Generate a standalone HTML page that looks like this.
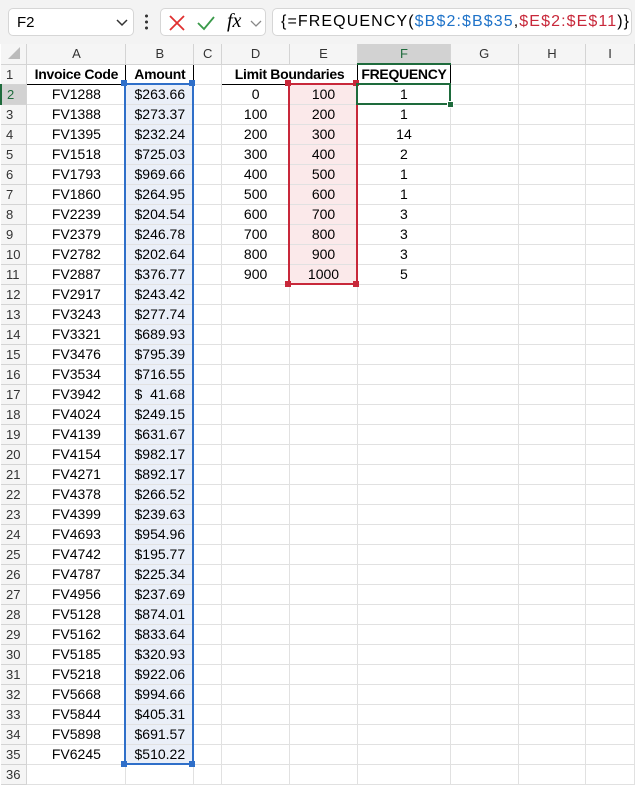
<!DOCTYPE html>
<html><head><meta charset="utf-8"><style>
*{box-sizing:border-box;margin:0;padding:0}
body{width:635px;height:789px;overflow:hidden;background:#fff;font-family:"Liberation Sans",Arial,sans-serif;position:relative}
.top{position:absolute;left:0;top:0;width:635px;height:44px;background:#f3f3f3}
.box{position:absolute;background:#fff;border:1px solid #d6d6d6;border-radius:5px}
table{position:absolute;left:0;top:44px;border-collapse:collapse;table-layout:fixed}
td{height:20px;border-right:1px solid #e1e1e1;border-bottom:1px solid #e1e1e1;font-size:14px;text-align:center;white-space:nowrap;overflow:visible;padding:0;line-height:19px;color:#000}
tr.h td{background:#f5f5f5;color:#333;font-size:13px;border-color:#d4d4d4}
td.r{background:#f5f5f5;color:#333;font-size:13px;text-align:left;padding-left:5px;border-color:#d4d4d4}
td.b{font-weight:bold;border:1px solid #000;letter-spacing:-0.3px}
.blue{background:#eaeff8}
.pink{background:#fbe9ea}
.sel{position:absolute;border:2px solid}
.hd{position:absolute;width:6px;height:6px}
</style></head><body>
<div class="top"></div>
<div class="box" style="left:8px;top:8px;width:126px;height:28px"><span style="position:absolute;left:8px;top:5px;font-size:15px">F2</span><svg style="position:absolute;left:107px;top:10px" width="12" height="8"><path d="M1 1l5 5 5-5" fill="none" stroke="#333" stroke-width="1.5"/></svg></div>
<div style="position:absolute;left:145px;top:13px;width:3px;height:18px;background:radial-gradient(circle,#333 1.4px,transparent 1.6px) 0 0/3px 6px"></div>
<div class="box" style="left:160px;top:8px;width:106px;height:28px">
<svg style="position:absolute;left:7px;top:5px" width="18" height="18"><path d="M2 2l14 14M16 2L2 16" stroke="#e03030" stroke-width="1.8"/></svg>
<svg style="position:absolute;left:35px;top:5px" width="20" height="18"><path d="M2 9l6 6L18 3" fill="none" stroke="#3a9a4a" stroke-width="1.8"/></svg>
<span style="position:absolute;left:66px;top:1px;font-family:'Liberation Serif',serif;font-style:italic;font-size:20px">fx</span>
<svg style="position:absolute;left:89px;top:11px" width="12" height="8"><path d="M1 1l5 5 5-5" fill="none" stroke="#888" stroke-width="1.3"/></svg></div>
<div class="box" style="left:272px;top:8px;width:360px;height:28px"><span style="position:absolute;left:8px;top:4px;font-size:16px;letter-spacing:1.1px;font-family:'Liberation Sans',sans-serif">{=FREQUENCY(<span style="color:#1f73c9">$B$2:$B$35</span>,<span style="color:#c8283a">$E$2:$E$11</span>)}</span></div>
<table>
<colgroup><col style="width:26px"><col style="width:99px"><col style="width:68px"><col style="width:28px"><col style="width:68px"><col style="width:68px"><col style="width:93px"><col style="width:68px"><col style="width:68px"><col style="width:49px"></colgroup>
<tr class="h"><td><svg width="14" height="14" style="position:relative;top:2px"><path d="M13 1V13H1Z" fill="#bbb"/></svg></td><td>A</td><td>B</td><td>C</td><td>D</td><td>E</td><td style="background:#d2d2d2;color:#1e6b3c;border-bottom:2px solid #1e6b3c">F</td><td>G</td><td>H</td><td>I</td></tr>
<tr><td class="r">1</td><td class="b">Invoice Code</td><td class="b">Amount</td><td></td><td class="b" colspan="2">Limit Boundaries</td><td class="b">FREQUENCY</td><td></td><td></td><td></td></tr>
<tr><td class="r" style="background:#d2d2d2;color:#1e6b3c;border-left:2px solid #1e6b3c">2</td><td>FV1288</td><td class="blue">$263.66</td><td></td><td>0</td><td class="pink">100</td><td>1</td><td></td><td></td><td></td></tr>
<tr><td class="r">3</td><td>FV1388</td><td class="blue">$273.37</td><td></td><td>100</td><td class="pink">200</td><td>1</td><td></td><td></td><td></td></tr>
<tr><td class="r">4</td><td>FV1395</td><td class="blue">$232.24</td><td></td><td>200</td><td class="pink">300</td><td>14</td><td></td><td></td><td></td></tr>
<tr><td class="r">5</td><td>FV1518</td><td class="blue">$725.03</td><td></td><td>300</td><td class="pink">400</td><td>2</td><td></td><td></td><td></td></tr>
<tr><td class="r">6</td><td>FV1793</td><td class="blue">$969.66</td><td></td><td>400</td><td class="pink">500</td><td>1</td><td></td><td></td><td></td></tr>
<tr><td class="r">7</td><td>FV1860</td><td class="blue">$264.95</td><td></td><td>500</td><td class="pink">600</td><td>1</td><td></td><td></td><td></td></tr>
<tr><td class="r">8</td><td>FV2239</td><td class="blue">$204.54</td><td></td><td>600</td><td class="pink">700</td><td>3</td><td></td><td></td><td></td></tr>
<tr><td class="r">9</td><td>FV2379</td><td class="blue">$246.78</td><td></td><td>700</td><td class="pink">800</td><td>3</td><td></td><td></td><td></td></tr>
<tr><td class="r">10</td><td>FV2782</td><td class="blue">$202.64</td><td></td><td>800</td><td class="pink">900</td><td>3</td><td></td><td></td><td></td></tr>
<tr><td class="r">11</td><td>FV2887</td><td class="blue">$376.77</td><td></td><td>900</td><td class="pink">1000</td><td>5</td><td></td><td></td><td></td></tr>
<tr><td class="r">12</td><td>FV2917</td><td class="blue">$243.42</td><td></td><td></td><td></td><td></td><td></td><td></td><td></td></tr>
<tr><td class="r">13</td><td>FV3243</td><td class="blue">$277.74</td><td></td><td></td><td></td><td></td><td></td><td></td><td></td></tr>
<tr><td class="r">14</td><td>FV3321</td><td class="blue">$689.93</td><td></td><td></td><td></td><td></td><td></td><td></td><td></td></tr>
<tr><td class="r">15</td><td>FV3476</td><td class="blue">$795.39</td><td></td><td></td><td></td><td></td><td></td><td></td><td></td></tr>
<tr><td class="r">16</td><td>FV3534</td><td class="blue">$716.55</td><td></td><td></td><td></td><td></td><td></td><td></td><td></td></tr>
<tr><td class="r">17</td><td>FV3942</td><td class="blue">$&nbsp;&nbsp;41.68</td><td></td><td></td><td></td><td></td><td></td><td></td><td></td></tr>
<tr><td class="r">18</td><td>FV4024</td><td class="blue">$249.15</td><td></td><td></td><td></td><td></td><td></td><td></td><td></td></tr>
<tr><td class="r">19</td><td>FV4139</td><td class="blue">$631.67</td><td></td><td></td><td></td><td></td><td></td><td></td><td></td></tr>
<tr><td class="r">20</td><td>FV4154</td><td class="blue">$982.17</td><td></td><td></td><td></td><td></td><td></td><td></td><td></td></tr>
<tr><td class="r">21</td><td>FV4271</td><td class="blue">$892.17</td><td></td><td></td><td></td><td></td><td></td><td></td><td></td></tr>
<tr><td class="r">22</td><td>FV4378</td><td class="blue">$266.52</td><td></td><td></td><td></td><td></td><td></td><td></td><td></td></tr>
<tr><td class="r">23</td><td>FV4399</td><td class="blue">$239.63</td><td></td><td></td><td></td><td></td><td></td><td></td><td></td></tr>
<tr><td class="r">24</td><td>FV4693</td><td class="blue">$954.96</td><td></td><td></td><td></td><td></td><td></td><td></td><td></td></tr>
<tr><td class="r">25</td><td>FV4742</td><td class="blue">$195.77</td><td></td><td></td><td></td><td></td><td></td><td></td><td></td></tr>
<tr><td class="r">26</td><td>FV4787</td><td class="blue">$225.34</td><td></td><td></td><td></td><td></td><td></td><td></td><td></td></tr>
<tr><td class="r">27</td><td>FV4956</td><td class="blue">$237.69</td><td></td><td></td><td></td><td></td><td></td><td></td><td></td></tr>
<tr><td class="r">28</td><td>FV5128</td><td class="blue">$874.01</td><td></td><td></td><td></td><td></td><td></td><td></td><td></td></tr>
<tr><td class="r">29</td><td>FV5162</td><td class="blue">$833.64</td><td></td><td></td><td></td><td></td><td></td><td></td><td></td></tr>
<tr><td class="r">30</td><td>FV5185</td><td class="blue">$320.93</td><td></td><td></td><td></td><td></td><td></td><td></td><td></td></tr>
<tr><td class="r">31</td><td>FV5218</td><td class="blue">$922.06</td><td></td><td></td><td></td><td></td><td></td><td></td><td></td></tr>
<tr><td class="r">32</td><td>FV5668</td><td class="blue">$994.66</td><td></td><td></td><td></td><td></td><td></td><td></td><td></td></tr>
<tr><td class="r">33</td><td>FV5844</td><td class="blue">$405.31</td><td></td><td></td><td></td><td></td><td></td><td></td><td></td></tr>
<tr><td class="r">34</td><td>FV5898</td><td class="blue">$691.57</td><td></td><td></td><td></td><td></td><td></td><td></td><td></td></tr>
<tr><td class="r">35</td><td>FV6245</td><td class="blue">$510.22</td><td></td><td></td><td></td><td></td><td></td><td></td><td></td></tr>
<tr><td class="r">36</td><td></td><td></td><td></td><td></td><td></td><td></td><td></td><td></td><td></td></tr>
</table>
<div class="sel" style="left:124px;top:83px;width:70px;height:682px;border-color:#2f6fc9"></div>
<div class="hd" style="left:121px;top:80px;background:#2f6fc9"></div><div class="hd" style="left:189px;top:80px;background:#2f6fc9"></div>
<div class="hd" style="left:121px;top:761px;background:#2f6fc9"></div><div class="hd" style="left:189px;top:761px;background:#2f6fc9"></div>
<div class="sel" style="left:288px;top:83px;width:70px;height:202px;border-color:#c8283a"></div>
<div class="hd" style="left:285px;top:80px;background:#c8283a"></div><div class="hd" style="left:353px;top:80px;background:#c8283a"></div>
<div class="hd" style="left:285px;top:281px;background:#c8283a"></div><div class="hd" style="left:353px;top:281px;background:#c8283a"></div>
<div class="sel" style="left:356px;top:83px;width:95px;height:22px;border-color:#1e6b3c"></div>
<div class="hd" style="left:447px;top:101px;background:#1e6b3c;border:1px solid #fff;width:7px;height:7px"></div>
</body></html>
